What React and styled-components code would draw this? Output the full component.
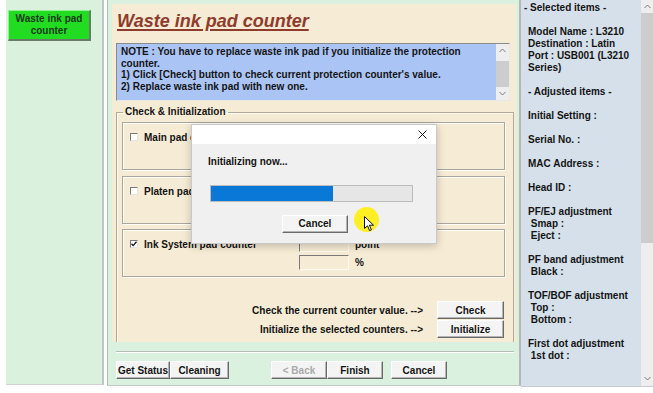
import React from "react";
import styled, { createGlobalStyle } from "styled-components";

const GlobalStyle = createGlobalStyle`
  html, body { margin: 0; padding: 0; background: #fff; }
  #root { width: 653px; height: 393px; }
`;

const Screen = styled.div`
  position: relative;
  width: 653px;
  height: 393px;
  display: flex;
  align-items: flex-start;
  padding-left: 6px;
  box-sizing: border-box;
  background: #fff;
  overflow: hidden;
  font-family: "Liberation Sans", Arial, sans-serif;
  font-weight: bold;
  font-size: 10px;
  color: #141414;
`;

const LeftPanel = styled.div`
  width: 98px;
  height: 385px;
  box-sizing: border-box;
  background: #d9f1dd;
  border-right: 2px solid #c2c6c2;
  border-bottom: 1px solid #d0d4d0;
  padding: 10px 0 0 2px;
`;

const NavButton = styled.div`
  width: 83px;
  height: 31px;
  box-sizing: border-box;
  background: #22dc22;
  border-top: 1px solid #8ef08e;
  border-left: 1px solid #8ef08e;
  border-right: 2px solid #6a7a6a;
  border-bottom: 2px solid #6a7a6a;
  color: #1d3a1d;
  text-align: center;
  line-height: 11.5px;
  padding-top: 2px;
`;

const Splitter = styled.div`
  width: 3px;
  height: 386px;
  background: #fff;
`;

const MainPanel = styled.div`
  width: 414px;
  height: 386px;
  box-sizing: border-box;
  background: #d9f1de;
  border-left: 1px solid #b4b8b4;
  border-right: 2px solid #b4b8b4;
  border-bottom: 1px solid #c6cac6;
  padding: 4px 3px 0 4px;
  display: flex;
  flex-direction: column;
`;

const Cream = styled.div`
  height: 338px;
  background: #f6ebd4;
  padding-top: 7px;
  box-sizing: border-box;
  display: flex;
  flex-direction: column;
`;

const Title = styled.div`
  margin-left: 5px;
  font-size: 18px;
  line-height: 20px;
  font-style: italic;
  color: #8e3b2c;
  text-decoration: underline;
  text-decoration-thickness: 2px;
  text-underline-offset: 2px;
`;

const NoteBox = styled.div`
  margin: 12px 0 0 4px;
  width: 394px;
  height: 58px;
  box-sizing: border-box;
  display: flex;
  border-top: 1px solid #8c8c8c;
  border-left: 1px solid #8c8c8c;
  border-right: 1px solid #e8e8e8;
  border-bottom: 1px solid #e8e8e8;
  background: #abc4f6;
`;

const NoteText = styled.div`
  flex: 1;
  padding: 2px 0 0 4px;
  line-height: 11.7px;
  white-space: nowrap;
`;

const ScrollBar = styled.div`
  width: ${(p) => p.$w || 12}px;
  display: flex;
  flex-direction: column;
  align-items: center;
  background: #eeeeee;
  color: #7a7a7a;
`;

const Arrow = styled.svg`
  flex: none;
  margin: ${(p) => p.$m || "4px 0"};
`;

const Thumb = styled.div`
  width: 100%;
  height: ${(p) => p.$h}px;
  margin-top: ${(p) => p.$top || 0}px;
  background: #cdcdcd;
`;

const Group = styled.fieldset`
  margin: 5px 0 0 4px;
  width: 398px;
  flex: 1;
  box-sizing: border-box;
  min-width: 0;
  border: 1px solid #b2a996;
  border-bottom: none;
  box-shadow: inset 1px 1px 0 #fffaf0;
  padding: 4px 8px 0 5px;
  display: flex;
  flex-direction: column;
`;

const Legend = styled.legend`
  padding: 0 2px;
  margin-left: 1px;
  line-height: 12px;
`;

const CounterBox = styled.div`
  height: 48px;
  margin-bottom: ${(p) => p.$mb ?? 6}px;
  box-sizing: border-box;
  border: 1px solid #a8a8a0;
  box-shadow: inset 1px 1px 0 #fffdf6, 1px 1px 0 #fffdf6;
  display: flex;
  padding: 7px 0 0 7px;
`;

const CheckRow = styled.div`
  width: 169px;
  display: flex;
  align-items: flex-start;
  gap: 6px;
  padding-top: 2px;
`;

const CheckBox = styled.span`
  width: 8px;
  height: 8px;
  margin-top: 1px;
  flex: none;
  box-sizing: border-box;
  background: #fff;
  border-top: 1px solid #7a7a7a;
  border-left: 1px solid #7a7a7a;
  border-right: 1px solid #e4e4e4;
  border-bottom: 1px solid #e4e4e4;
  position: relative;
`;

const Fields = styled.div`
  display: flex;
  flex-direction: column;
  gap: 3px;
`;

const FieldRow = styled.div`
  display: flex;
  align-items: center;
  gap: 6px;
`;

const Input = styled.div`
  width: 50px;
  height: 15px;
  box-sizing: border-box;
  border-top: 1px solid #7a7a7a;
  border-left: 1px solid #7a7a7a;
  border-right: 1px solid #fffaf0;
  border-bottom: 1px solid #fffaf0;
`;

const ActionRow = styled.div`
  display: flex;
  justify-content: flex-end;
  align-items: center;
  gap: 14px;
  margin-top: ${(p) => p.$mt || 0}px;
  padding-right: 1px;
`;

const Button = styled.div`
  width: ${(p) => p.$w}px;
  height: ${(p) => p.$h || 18}px;
  box-sizing: border-box;
  display: flex;
  align-items: center;
  justify-content: center;
  background: #f4f4f4;
  border-top: 1px solid #ffffff;
  border-left: 1px solid #ffffff;
  border-right: 1px solid #6a6a6a;
  border-bottom: 1px solid #6a6a6a;
  box-shadow: inset -1px -1px 0 #b4b4b4;
  color: ${(p) => (p.$disabled ? "#a9a9a9" : "#141414")};
  margin-left: ${(p) => p.$ml || 0}px;
  margin-top: ${(p) => p.$mt || 0}px;
  flex: none;
`;

const Separator = styled.div`
  margin: 9px 2px 0 4px;
  height: 1px;
  background: #b8bcb8;
  box-shadow: 0 1px 0 #fff;
`;

const BottomRow = styled.div`
  display: flex;
  margin: 9px 0 0 4px;
`;

const RightPanel = styled.div`
  width: 132px;
  height: 387px;
  display: flex;
  background: #d5e0ea;
  border-bottom: 1px solid #c8ccd0;
  box-sizing: border-box;
`;

const InfoList = styled.div`
  flex: 1;
  padding: 2px 0 0 7px;
  line-height: 12px;
`;

const InfoHead = styled.div`
  margin-left: ${(p) => p.$shift || 0}px;
  margin-bottom: 12px;
`;

const InfoBlock = styled.div`
  margin-bottom: 12px;
  white-space: pre;
`;

const Dialog = styled.div`
  position: absolute;
  left: 191px;
  top: 124px;
  width: 246px;
  height: 120px;
  box-sizing: border-box;
  background: #f0f0f0;
  border: 1px solid #c9c9c9;
  box-shadow: 0 2px 8px rgba(0, 0, 0, 0.22);
  display: flex;
  flex-direction: column;
`;

const DialogBar = styled.div`
  height: 19px;
  background: #fff;
  display: flex;
  justify-content: flex-end;
  align-items: center;
  padding-right: 9px;
`;

const DialogBody = styled.div`
  padding: 12px 0 0 16px;
  line-height: 12px;
  display: flex;
  flex-direction: column;
`;

const Progress = styled.div`
  width: 203px;
  height: 17px;
  margin: 17px 0 0 2px;
  box-sizing: border-box;
  border: 1px solid #bcbcbc;
  background: #e6e6e6;
`;

const ProgressFill = styled.div`
  height: 100%;
  background: #0a78d7;
`;

const Highlight = styled.div`
  position: absolute;
  left: 354px;
  top: 207px;
  width: 25px;
  height: 25px;
  border-radius: 50%;
  background: rgba(255, 238, 0, 0.85);
`;

const Pointer = styled.svg`
  position: absolute;
  left: 364px;
  top: 216px;
`;

const Up = () => (
  <Arrow width="7" height="5" viewBox="0 0 7 5">
    <path d="M0.5 4 L3.5 1 L6.5 4" fill="none" stroke="currentColor" strokeWidth="1" />
  </Arrow>
);

const Down = ({ m }) => (
  <Arrow width="7" height="5" viewBox="0 0 7 5" $m={m}>
    <path d="M0.5 1 L3.5 4 L6.5 1" fill="none" stroke="currentColor" strokeWidth="1" />
  </Arrow>
);

const Tick = () => (
  <svg width="6" height="6" viewBox="0 0 6 6" style={{ position: "absolute", left: 0, top: 0 }}>
    <path d="M0.5 2.8 L2.2 4.6 L5.5 0.8" fill="none" stroke="#111" strokeWidth="1.3" />
  </svg>
);

function Counter({ label, checked, mb }) {
  return (
    <CounterBox $mb={mb}>
      <CheckRow>
        <CheckBox>{checked && <Tick />}</CheckBox>
        <span>{label}</span>
      </CheckRow>
      <Fields>
        <FieldRow>
          <Input />
          <span>point</span>
        </FieldRow>
        <FieldRow>
          <Input />
          <span>%</span>
        </FieldRow>
      </Fields>
    </CounterBox>
  );
}

const info = [
  "Model Name : L3210\nDestination : Latin\nPort : USB001 (L3210\nSeries)",
];
const adjusted = [
  "Initial Setting :",
  "Serial No. :",
  "MAC Address :",
  "Head ID :",
  "PF/EJ adjustment\n Smap :\n Eject :",
  "PF band adjustment\n Black :",
  "TOF/BOF adjustment\n Top :\n Bottom :",
  "First dot adjustment\n 1st dot :",
];

export default function App() {
  return (
    <>
      <GlobalStyle />
      <Screen>
        <LeftPanel>
          <NavButton>
            Waste ink pad
            <br />
            counter
          </NavButton>
        </LeftPanel>
        <Splitter />
        <MainPanel>
          <Cream>
            <Title>Waste ink pad counter</Title>
            <NoteBox>
              <NoteText>
                NOTE : You have to replace waste ink pad if you initialize the protection
                <br />
                counter.
                <br />
                1) Click [Check] button to check current protection counter's value.
                <br />
                2) Replace waste ink pad with new one.
              </NoteText>
              <ScrollBar $w={13}>
                <Up />
                <Thumb $h={26} $top={4} />
                <div style={{ flex: 1 }} />
                <Down m="0 0 4px" />
              </ScrollBar>
            </NoteBox>
            <Group>
              <Legend>Check &amp; Initialization</Legend>
              <Counter label="Main pad counter" />
              <Counter label="Platen pad counter" mb={5} />
              <Counter label="Ink System pad counter" checked mb={0} />
              <ActionRow $mt={24}>
                <span>Check the current counter value. --&gt;</span>
                <Button $w={67}>Check</Button>
              </ActionRow>
              <ActionRow $mt={1}>
                <span>Initialize the selected counters. --&gt;</span>
                <Button $w={67}>Initialize</Button>
              </ActionRow>
            </Group>
          </Cream>
          <Separator />
          <BottomRow>
            <Button $w={54}>Get Status</Button>
            <Button $w={59}>Cleaning</Button>
            <Button $w={56} $ml={42} $disabled>
              &lt; Back
            </Button>
            <Button $w={56}>Finish</Button>
            <Button $w={56} $ml={8}>
              Cancel
            </Button>
          </BottomRow>
        </MainPanel>
        <RightPanel>
          <InfoList>
            <InfoHead $shift={-4}>- Selected items -</InfoHead>
            {info.map((t) => (
              <InfoBlock key={t}>{t}</InfoBlock>
            ))}
            <InfoHead>- Adjusted items -</InfoHead>
            {adjusted.map((t) => (
              <InfoBlock key={t}>{t}</InfoBlock>
            ))}
          </InfoList>
          <ScrollBar $w={12}>
            <Up />
            <Thumb $h={230} />
            <div style={{ flex: 1 }} />
            <Down m="0 0 5px" />
          </ScrollBar>
        </RightPanel>

        <Dialog>
          <DialogBar>
            <svg width="9" height="9" viewBox="0 0 9 9">
              <path d="M0.5 0.5 L8.5 8.5 M8.5 0.5 L0.5 8.5" stroke="#222" strokeWidth="1" />
            </svg>
          </DialogBar>
          <DialogBody>
            <span>Initializing now...</span>
            <Progress>
              <ProgressFill style={{ width: "60.5%" }} />
            </Progress>
            <Button $w={66} $ml={74} $mt={13}>
              Cancel
            </Button>
          </DialogBody>
        </Dialog>
        <Highlight />
        <Pointer width="11" height="16" viewBox="0 0 11 16">
          <path
            d="M0.5 0.5 L0.5 12.5 L3.5 9.8 L5.6 14.6 L7.4 13.8 L5.4 9.2 L9.5 9.2 Z"
            fill="#fff"
            stroke="#111"
            strokeWidth="1"
          />
        </Pointer>
      </Screen>
    </>
  );
}
